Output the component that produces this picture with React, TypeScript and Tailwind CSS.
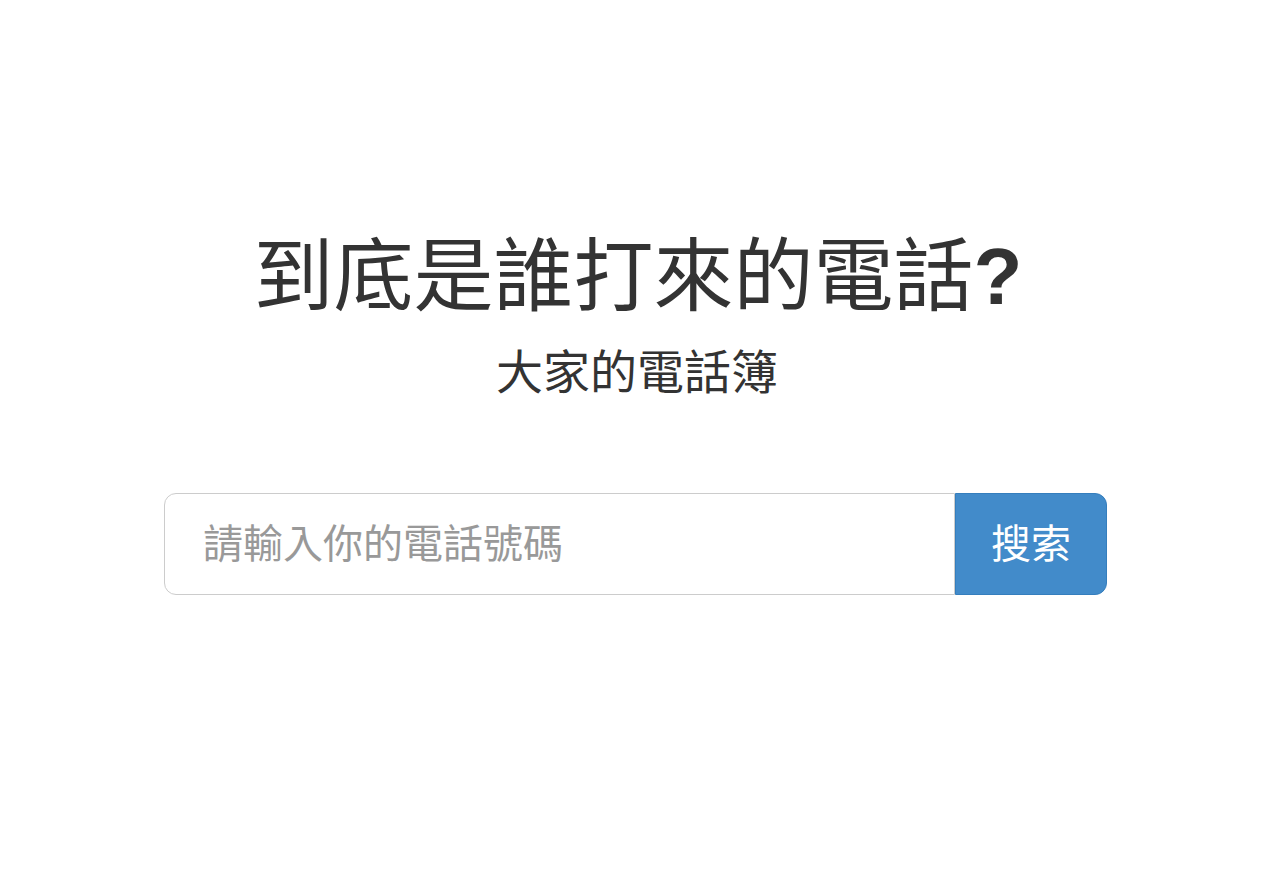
export default function App() {
  const font = { fontFamily: '"Liberation Sans", "Noto Sans CJK TC", sans-serif' };
  return (
    <div className="w-[1280px] h-[880px] bg-white flex flex-col items-center" style={font}>
      <h1 className="mt-[231px] text-[80px] leading-[92px] font-normal text-[#333333] ml-[-4px]">
        到底是誰打來的電話<span className="font-bold">?</span>
      </h1>
      <p className="mt-[22px] text-[47px] leading-[56px] text-[#333333] ml-[-6px]">大家的電話簿</p>
      <div className="mt-[92px] flex w-[943px] h-[102px] mr-[9px]">
        <input
          className="flex-1 h-full border border-[#cccccc] rounded-l-[12px] pl-[38px] text-[40px] text-[#555555] placeholder:text-[#999999] outline-none"
          placeholder="請輸入你的電話號碼"
        />
        <button className="w-[152px] h-full bg-[#428bca] border border-[#357ebd] rounded-r-[12px] text-white text-[40px]">搜索</button>
      </div>
    </div>
  );
}
